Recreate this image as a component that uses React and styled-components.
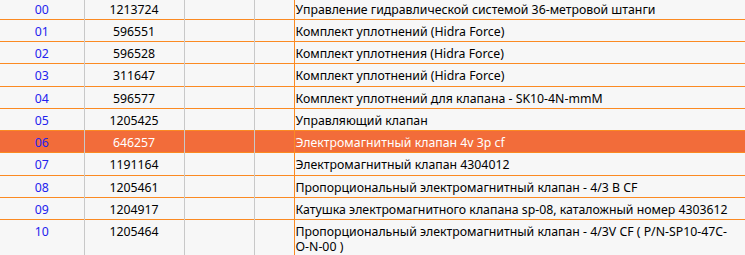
import React from "react";
import styled, { createGlobalStyle } from "styled-components";

const GlobalStyle = createGlobalStyle`
  html, body {
    margin: 0;
    padding: 0;
    background: #f7f7f7;
  }
  body {
    font-family: "Noto Sans", Tahoma, sans-serif;
  }
`;

const items = [
  { num: "00", code: "1213724", name: "Управление гидравлической системой 36-метровой штанги" },
  { num: "01", code: "596551", name: "Комплект уплотнений (Hidra Force)" },
  { num: "02", code: "596528", name: "Комплект уплотнения (Hidra Force)" },
  { num: "03", code: "311647", name: "Комплект уплотнений (Hidra Force)" },
  { num: "04", code: "596577", name: "Комплект уплотнений для клапана - SK10-4N-mmM" },
  { num: "05", code: "1205425", name: "Управляющий клапан" },
  { num: "06", code: "646257", name: "Электромагнитный клапан 4v 3p cf", active: true },
  { num: "07", code: "1191164", name: "Электромагнитный клапан 4304012" },
  { num: "08", code: "1205461", name: "Пропорциональный электромагнитный клапан - 4/3 В CF" },
  { num: "09", code: "1204917", name: "Катушка электромагнитного клапана sp-08, каталожный номер 4303612" },
  { num: "10", code: "1205464", name: "Пропорциональный электромагнитный клапан - 4/3V CF ( P/N-SP10-47C-O-N-00 )" },
];

const Wrap = styled.div`
  width: 745px;
  height: 255px;
  overflow: hidden;
`;

const Table = styled.table`
  width: 745px;
  margin-top: -2.2px;
  border-collapse: collapse;
  table-layout: fixed;
  font-size: 12.3px;
  line-height: 15px;
  color: #000;
`;

const Col = styled.col`
  width: ${(p) => p.$w}px;
`;

const Row = styled.tr`
  background: ${(p) => (p.$active ? "#f26c3a" : "#f7f7f7")};
  color: ${(p) => (p.$active ? "#fff" : "#000")};
  border-bottom: 1px solid #fb8a22;
`;

const Cell = styled.td`
  padding: 4px 2px 2.22px;
  vertical-align: top;
  text-align: ${(p) => p.$align || "center"};
  border-left: 1px solid ${(p) => (p.$orange ? "#fb8a22" : "#c8c8c8")};
  border-right: ${(p) => (p.$last ? "1px solid #c8c8c8" : "none")};
  &:first-child {
    border-left: none;
  }
`;

const Num = styled(Cell)`
  color: #2222ee;
`;

const Name = styled(Cell)`
  padding-left: 1px;
  padding-right: 10px;
`;

export default function App() {
  return (
    <Wrap>
      <GlobalStyle />
      <Table>
        <colgroup>
          <Col $w={84} />
          <Col $w={100} />
          <Col $w={70} />
          <Col $w={40} />
          <Col $w={451} />
        </colgroup>
        <tbody>
          {items.map((it) => (
            <Row key={it.num} $active={it.active}>
              <Num>{it.num}</Num>
              <Cell>{it.code}</Cell>
              <Cell />
              <Cell />
              <Name $align="left" $orange $last>
                {it.name}
              </Name>
            </Row>
          ))}
        </tbody>
      </Table>
    </Wrap>
  );
}
